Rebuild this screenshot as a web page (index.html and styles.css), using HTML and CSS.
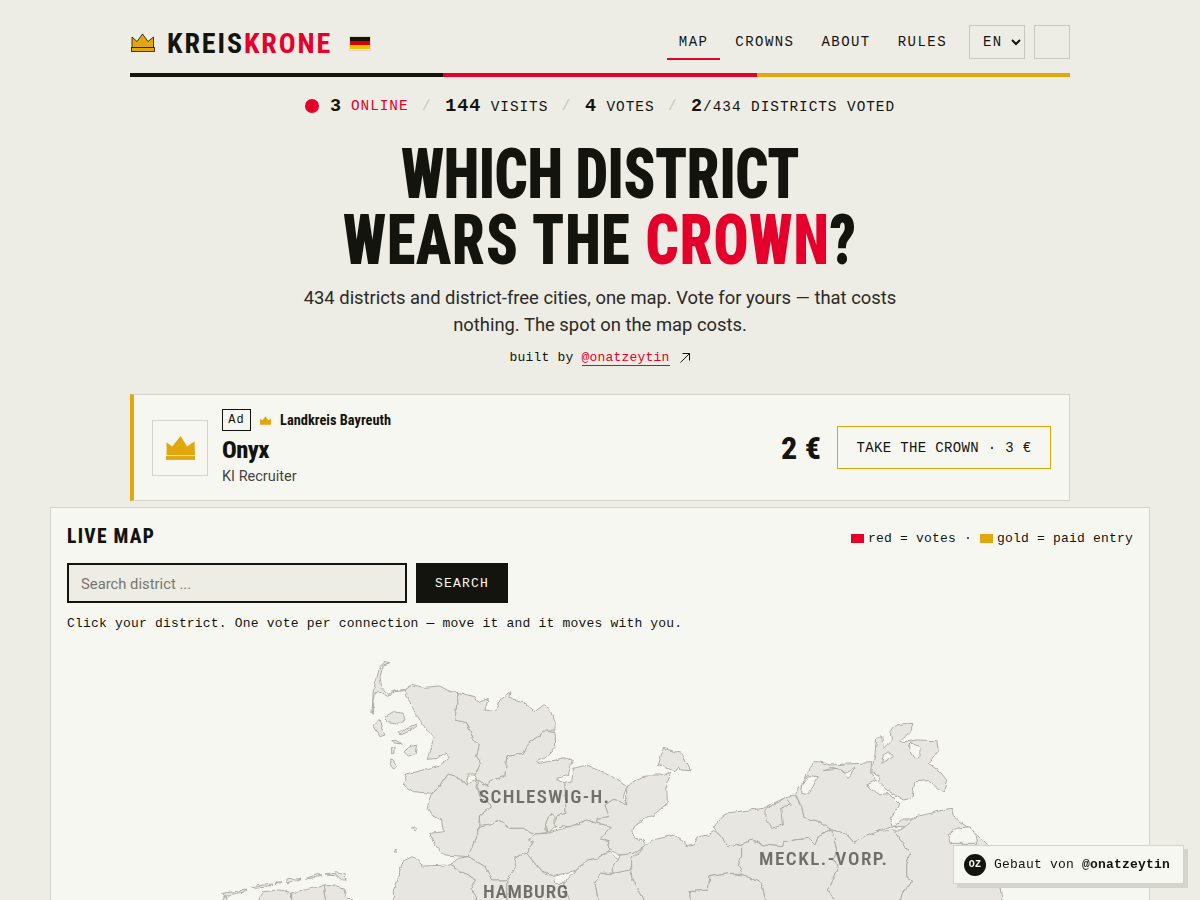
FILE: index.html
```html
<!DOCTYPE html>
<html lang="en">
<head>
<meta charset="utf-8">
<title>KreisKrone</title>
<link rel="stylesheet" href="styles.css">
</head>
<body>
<div class="wrap">
  <header class="top">
    <a class="logo">
      <svg class="logo-crown" viewBox="0 0 24 20" width="24" height="20"><path class="crown-body" d="M1 14.500V4L6 8.500 11.500 1 17 8.500 22.500 4V14.500Z"/><rect class="crown-body" x=".5" y="14.500" width="23" height="4"/></svg>
      <span class="logo-text">KREIS<em>KRONE</em></span>
      <span class="flag"><i class="s1"></i><i class="s2"></i><i class="s3"></i></span>
    </a>
    <nav class="nav">
      <a class="active">MAP</a><a>CROWNS</a><a>ABOUT</a><a>RULES</a>
      <select class="lang"><option>EN</option></select>
      <button class="theme" aria-label="Theme"></button>
    </nav>
  </header>
  <div class="tricolor"><i class="t1"></i><i class="t2"></i><i class="t3"></i></div>
  <div class="stats">
    <span class="stat live"><i class="dot"></i><b>3</b>ONLINE</span><span class="sep">/</span>
    <span class="stat"><b>144</b> VISITS</span><span class="sep">/</span>
    <span class="stat"><b>4</b> VOTES</span><span class="sep">/</span>
    <span class="stat"><b>2</b>/434 DISTRICTS VOTED</span>
  </div>
  <h1 class="hero">WHICH DISTRICT<br><span class="l2">WEARS THE <em>CROWN</em>?</span></h1>
  <p class="lead">434 districts and district-free cities, one map. Vote for yours — that costs nothing. The spot on the map costs.</p>
  <p class="built">built by <a>@onatzeytin</a><svg class="arrow" viewBox="0 0 12 12" width="12" height="12"><path d="M1.500 10.500 10.500 1.500M3.500 1.500H10.500V8.500"/></svg></p>
  <section class="ad">
    <div class="thumb"><svg viewBox="0 0 28 23" width="29" height="24"><path class="gold" d="M.5 18.500V6L6 10 14 0 20.500 10 27.500 5 28 18.500Z"/><rect class="gold" y="19.300" width="28" height="3.700"/></svg></div>
    <div class="ad-info">
      <div class="ad-top"><span class="badge">Ad</span><svg viewBox="0 0 28 22" width="11" height="9"><path class="gold" d="M0 22V6.500L6 10.500 14 0 21 10.500 28 6.500V22Z"/></svg><span class="district">Landkreis Bayreuth</span></div>
      <div class="ad-name">Onyx</div>
      <div class="ad-sub">KI Recruiter</div>
    </div>
    <div class="price">2 €</div>
    <button class="take">TAKE THE CROWN · 3 €</button>
  </section>
</div>
<section class="map-panel">
  <div class="map-head">
    <h2>LIVE MAP</h2>
    <div class="legend"><i class="sw red"></i>red = votes ·<i class="sw goldsw"></i>gold = paid entry</div>
  </div>
  <form class="search"><input placeholder="Search district ..."><button type="button">SEARCH</button></form>
  <p class="hint">Click your district. One vote per connection — move it and it moves with you.</p>
  <svg class="map" viewBox="67 640 1066 420" width="1066" height="420">
    <defs>
      <filter id="rough" filterUnits="userSpaceOnUse" x="67" y="640" width="1066" height="420">
        <feTurbulence type="fractalNoise" baseFrequency=".14" numOctaves="2" seed="4"/>
        <feDisplacementMap in="SourceGraphic" scale="4" xChannelSelector="R" yChannelSelector="G"/>
      </filter>
    </defs>
    <g class="rough">
    <g class="kreise" transform="translate(360 650) scale(.33333)">
      <polygon points="75,35 90,38 70,45 60,80 65,115 80,130 110,122 135,118 155,103 190,112 240,108 270,125 298,128 290,165 285,210 320,218 340,265 358,285 350,320 365,340 345,375 325,375 318,405 300,385 262,375 240,410 215,430 160,425 130,405 140,372 190,360 240,345 268,325 258,305 235,325 202,328 210,300 222,262 200,240 160,180 135,122 105,125 78,138 55,125 42,130 40,190 36,190 40,120 50,85 60,50"/>
      <polygon points="298,128 345,140 355,158 385,145 375,180 410,185 420,150 453,125 450,145 490,155 525,185 550,165 565,170 585,215 585,240 560,240 505,280 490,310 440,320 435,380 390,392 385,410 350,390 345,375 365,340 350,320 358,285 340,265 320,218 285,210 290,165"/>
      <polygon points="585,245 587,290 560,320 530,335 540,340 620,322 637,330 625,375 610,380 590,385 615,400 618,490 585,500 575,490 555,515 560,548 525,552 490,535 450,535 420,512 395,525 360,530 358,500 395,470 360,440 350,390 385,410 390,392 435,380 440,320 490,310 505,280 560,240"/>
      <polygon points="262,375 300,385 318,405 345,390 360,440 395,470 358,500 355,545 325,620 255,615 235,600 210,550 250,545 245,510 215,495 202,475 212,435 240,410"/>
      <polygon points="640,358 685,347 750,375 800,410 790,440 800,465 760,448 735,465 748,500 712,505 710,520 680,510 630,530 585,530 585,500 618,490 615,400 635,395"/>
      <polygon points="800,410 860,375 900,375 932,368 920,400 922,460 880,495 830,520 815,545 825,565 850,570 855,590 820,610 780,615 750,600 745,575 720,570 755,530 710,520 712,505 748,500 735,465 760,448 800,465"/>
      <polygon points="895,345 910,295 965,310 992,362 960,360 955,350 945,362 915,352 900,345"/>
      <polygon points="555,515 575,490 585,500 585,530 565,548"/>
      <polygon points="560,550 630,530 680,510 710,520 755,530 720,570 745,575 750,600 710,625 680,630 650,660 580,680 540,660 500,610 520,575 505,570 525,552"/>
      <polygon points="360,530 395,525 420,512 450,535 490,535 525,552 505,570 520,575 500,610 465,620 470,650 440,690 395,690 375,650 325,620 355,545"/>
      <polygon points="465,620 500,610 540,660 580,680 585,700 620,700 640,780 440,780 440,690 470,650"/>
      <polygon points="750,605 775,630 755,650 760,670 720,670 705,700 720,780 640,780 610,700 650,660 680,630 710,625"/>
      <polygon points="855,590 820,625 810,660 780,670 760,670 755,650 775,630 780,615 820,610"/>
      <polygon points="720,670 760,670 810,660 820,690 870,780 720,780 705,700"/>
      <polygon points="815,625 880,570 940,555 970,575 975,570 975,590 1000,585 1015,560 1045,555 1060,545 1075,550 1105,590 1145,585 1145,620 1135,650 1150,670 1110,670 1050,680 1045,720 990,725 990,780 870,780 820,690 815,660"/>
      <polygon points="100,780 100,720 130,630 155,618 190,648 270,645 350,690 330,715 350,740 325,780"/>
      <polygon points="270,645 295,625 325,620 375,650 395,690 440,690 440,780 345,780 350,740 330,715 350,690"/>
      <polygon points="75,200 100,185 130,190 135,210 110,222 85,218"/>
      <polygon points="40,225 58,208 62,225 75,255 60,260"/>
      <polygon points="150,290 170,285 165,310 145,318 132,305"/>
      <polygon points="115,248 170,222 175,228 120,255"/>
      <polygon points="95,290 105,290 105,310 95,312"/>
      <polygon points="92,325 112,350 100,357 88,340"/>
      <polygon points="95,272 105,270 128,282 108,280"/>
      <circle cx="163" cy="535" r="4"/>
      <polygon points="100,606 105,597 110,606"/>
    </g>
    <g class="kreise" transform="translate(200 810) scale(.33333)">
      <polygon points="65,250 140,240 140,245 70,257"/>
      <polygon points="155,230 215,222 210,230 165,235"/>
      <polygon points="225,220 245,218 240,222"/>
      <polygon points="260,210 305,205 280,215 262,222"/>
      <polygon points="320,205 350,193 365,198 330,205"/>
      <polygon points="378,192 410,185 425,195 435,190 438,210 425,210 410,195"/>
      <polygon points="70,262 80,258 82,290 68,290"/>
      <polygon points="165,290 190,245 240,240 275,248 275,290"/>
      <polygon points="275,248 370,228 380,290 275,290"/>
      <polygon points="370,228 405,225 435,235 440,262 460,270 470,290 380,290"/>
    </g>
    <g class="kreise" transform="translate(680 710) scale(.33333)">
      <polygon points="30,545 85,540 90,500 150,490 190,495 245,520 265,600 30,600"/>
      <polygon points="100,350 125,320 145,308 250,295 325,258 345,255 365,290 372,322 420,335 455,360 415,380 405,405 385,385 345,390 310,395 305,410 250,405 215,390 185,405 145,410 115,370"/>
      <polygon points="255,300 320,260 335,285 305,290 310,345 275,355 255,320"/>
      <polygon points="345,250 370,215 400,155 415,155 450,165 575,158 572,185 590,210 560,225 600,255 625,250 660,285 630,325 640,350 590,365 520,397 500,370 455,360 420,335 372,322 365,290"/>
      <polygon class="hole" points="368,225 385,197 415,200 385,255 365,250"/>
      <polygon class="hole" points="430,182 455,175 490,183 505,205 525,175 500,188 470,178"/>
      <polygon points="590,85 605,80 610,115 635,90 630,65 640,50 695,40 695,60 660,95 680,95 710,90 770,92 775,120 745,160 780,185 800,210 790,245 760,225 745,212 705,215 695,265 670,270 620,240 595,215 600,200 575,185 585,130"/>
      <polygon class="hole" points="688,98 720,110 720,140 705,145 690,120"/>
      <polygon class="hole" points="605,160 640,140 625,125 610,135"/>
      <polygon points="455,360 500,370 520,397 590,365 640,360 665,395 690,430 680,465 680,500 695,510 640,600 480,600 445,540 475,475 462,445 470,420"/>
      <polygon points="185,405 215,390 250,405 305,410 310,395 345,390 385,385 405,405 415,380 455,360 470,420 462,445 475,475 445,540 480,600 265,600 245,520 190,495 175,470 185,440"/>
      <polygon points="640,350 665,330 700,330 720,358 680,350"/>
      <polygon points="660,360 710,320 790,300 815,295 820,320 860,350 920,400 960,530 970,600 640,600 695,510 680,500 680,465 690,430 665,395 640,360"/>
      <polygon class="hole" points="805,375 830,355 870,350 885,375 890,400 810,400"/>
    </g>
    </g>
    <text class="land" x="479" y="803" textLength="130">SCHLESWIG-H.</text>
    <text class="land" x="483" y="898" textLength="85">HAMBURG</text>
    <text class="land" x="759" y="865" textLength="128">MECKL.-VORP.</text>
  </svg>
</section>
<aside class="credit"><span class="avatar">OZ</span><span>Gebaut von <b>@onatzeytin</b></span></aside>
</body>
</html>
```
FILE: styles.css
```css
* { box-sizing: border-box; }
html { scrollbar-width: none; }
body {
  margin: 0;
  background: #edece5;
  color: #14140f;
  font-family: Roboto, "Liberation Sans", sans-serif;
}
.wrap { width: 940px; margin: 0 auto; }
.top {
  display: flex;
  justify-content: space-between;
  align-items: center;
  height: 73px;
  padding-top: 11px;
}
.logo { display: flex; align-items: center; margin-top: 2px; }
.logo-crown { margin-left: 1px; }
.crown-body { fill: #e0a80d; stroke: #14140f; stroke-width: .8; }
.logo-text {
  margin-left: 12px;
  font: 700 28px Roboto, sans-serif;
  font-stretch: 75%;
  letter-spacing: 1.9px;
}
.logo-text em { font-style: normal; color: #e4002b; }
.flag {
  display: flex;
  flex-direction: column;
  width: 22px;
  height: 15px;
  margin-left: 17px;
  border: 1px solid #dbd8c8;
}
.flag i { flex: 1; }
.s1 { background: #14140f; }
.s2 { background: #dd0000; }
.s3 { background: #f5c000; }
.nav {
  display: flex;
  align-items: center;
  font: 14px "Liberation Mono", monospace;
  letter-spacing: 1.45px;
}
.nav a {
  display: block;
  padding: 8px 12px;
  margin-right: 3px;
  height: 35px;
  line-height: 18px;
  border-bottom: 2px solid transparent;
  margin-top: 1px;
}
.nav a.active { border-bottom-color: #e4002b; }
.lang {
  width: 56px;
  height: 34px;
  margin-left: 7px;
  padding-left: 9px;
  background: transparent;
  border: 1px solid #c9c8bf;
  color: #14140f;
  font: 14px "Liberation Mono", monospace;
  letter-spacing: 1.4px;
}
.theme {
  width: 36px;
  height: 34px;
  margin-left: 9px;
  background: transparent;
  border: 1px solid #c9c8bf;
}
.tricolor { display: flex; height: 4px; }
.tricolor i { flex: 1; }
.t1 { background: #14140f; }
.t2 { background: #e4002b; }
.t3 { background: #e0a80d; }
.stats {
  display: flex;
  justify-content: center;
  align-items: center;
  height: 58px;
  font: 14.4px "Liberation Mono", monospace;
  letter-spacing: .96px;
  white-space: pre;
}
.stat b { font-size: 18.4px; font-weight: 700; }
.stat.live { color: #e4002b; display: flex; align-items: center; }
.stat.live b { color: #14140f; margin: 0 9px 0 11px; }
.dot { width: 14px; height: 14px; border-radius: 50%; background: #e4002b; }
.sep { margin: 0 13.5px; color: #c9c8bf; }
.hero {
  margin: 6px 0 0;
  text-align: center;
  font: 900 70px/66px Roboto, sans-serif;
  font-stretch: 75%;
  letter-spacing: -.5px;
  transform: scaleX(.83);
}
.hero .l2 { letter-spacing: 1px; word-spacing: 1px; }
.hero em { font-style: normal; color: #e4002b; }
.lead {
  width: 640px;
  margin: 11px auto 0;
  text-align: center;
  font-size: 18.4px;
  line-height: 27px;
  color: #2a2a24;
}
.built {
  display: flex;
  justify-content: center;
  align-items: center;
  white-space: pre;
  margin: 11px 0 0;
  font: 13px/18px "Liberation Mono", monospace;
  letter-spacing: .2px;
}
.built a { color: #e4002b; border-bottom: 1px solid #e4002b; line-height: 14px; }
.arrow { margin-left: 9px; fill: none; stroke: #14140f; stroke-width: 1; }
.ad {
  display: flex;
  align-items: center;
  height: 107px;
  margin-top: 27px;
  padding: 0 18px;
  background: #f7f7f2;
  border: 1px solid #d5d4cc;
  border-left: 4px solid #e0a80d;
}
.thumb {
  display: flex;
  align-items: center;
  justify-content: center;
  width: 56px;
  height: 56px;
  margin-right: 14px;
  border: 1px solid #d5d4cc;
}
.gold { fill: #e0a80d; }
.ad-info { flex: 1; padding-top: 1px; }
.ad-top { display: flex; align-items: center; gap: 9px; }
.badge {
  display: block;
  width: 29px;
  height: 22px;
  border: 1px solid #14140f;
  text-align: center;
  font: 12px/20px "Liberation Mono", monospace;
  letter-spacing: 1px;
}
.district { font: 700 14.4px Roboto, sans-serif; font-stretch: 75%; }
.ad-name { margin-top: 4px; font: 800 24.5px/30px Roboto, sans-serif; font-stretch: 75%; letter-spacing: -.6px; }
.ad-sub { margin-top: 2px; font-size: 14.5px; line-height: 20px; color: #44443e; }
.price { margin-right: 16px; font: 800 32px Roboto, sans-serif; font-stretch: 75%; }
.take {
  width: 214px;
  height: 43px;
  background: transparent;
  border: 1px solid #e0a80d;
  color: #14140f;
  font: 14px "Liberation Mono", monospace;
  letter-spacing: .35px;
}
.map-panel {
  width: 1100px;
  margin: 6px auto 40px;
  padding: 16px;
  background: #f7f7f2;
  border: 1px solid #d5d4cc;
}
.map-head { display: flex; justify-content: space-between; align-items: center; height: 24px; }
.map-head h2 {
  margin: 0;
  font: 800 19.5px Roboto, sans-serif;
  font-stretch: 75%;
  letter-spacing: 1.3px;
}
.legend {
  display: flex;
  align-items: center;
  padding-top: 5px;
  font: 13px "Liberation Mono", monospace;
  letter-spacing: .2px;
}
.sw { width: 13px; height: 9px; margin-right: 4px; }
.red { background: #e4002b; }
.goldsw { background: #e0a80d; margin-left: 8px; }
.search { display: flex; gap: 9px; margin-top: 15px; }
.search input {
  width: 340px;
  height: 40px;
  padding: 1px 12px 0;
  background: #edece5;
  border: 2px solid #14140f;
  font: 14.8px Roboto, sans-serif;
}
.search input::placeholder { color: #77776e; opacity: 1; }
.search button {
  width: 92px;
  height: 40px;
  background: #14140f;
  border: 0;
  color: #f7f7f2;
  font: 13px "Liberation Mono", monospace;
  letter-spacing: 1.2px;
}
.hint {
  margin: 12px 0 0;
  font: 13px/18px "Liberation Mono", monospace;
  letter-spacing: .19px;
}
.map { display: block; margin-top: 7px; }
.rough { filter: url(#rough); }
.kreise polygon, .kreise circle {
  fill: #e7e6e0;
  stroke: #aeada4;
  stroke-width: 1;
  vector-effect: non-scaling-stroke;
  stroke-linejoin: round;
}
.kreise polygon.hole { fill: #f7f7f2; }
.land {
  font: 600 19px Roboto, sans-serif;
  font-stretch: 75%;
  fill: #14140f;
  fill-opacity: .56;
}
.credit {
  position: fixed;
  right: 16px;
  bottom: 16px;
  display: flex;
  align-items: center;
  gap: 8px;
  width: 231px;
  height: 39px;
  padding: 0 0 0 10px;
  background: #f7f7f2;
  border: 1px solid #d5d4cc;
  box-shadow: 4px 4px 0 #d5d4cc;
  font: 13px "Liberation Mono", monospace;
  letter-spacing: .2px;
  white-space: nowrap;
}
.credit b { font-weight: 700; }
.avatar {
  display: flex;
  align-items: center;
  justify-content: center;
  width: 22px;
  height: 22px;
  border-radius: 50%;
  background: #14140f;
  color: #f7f7f2;
  font-size: 10px;
  font-weight: 700;
}
```
